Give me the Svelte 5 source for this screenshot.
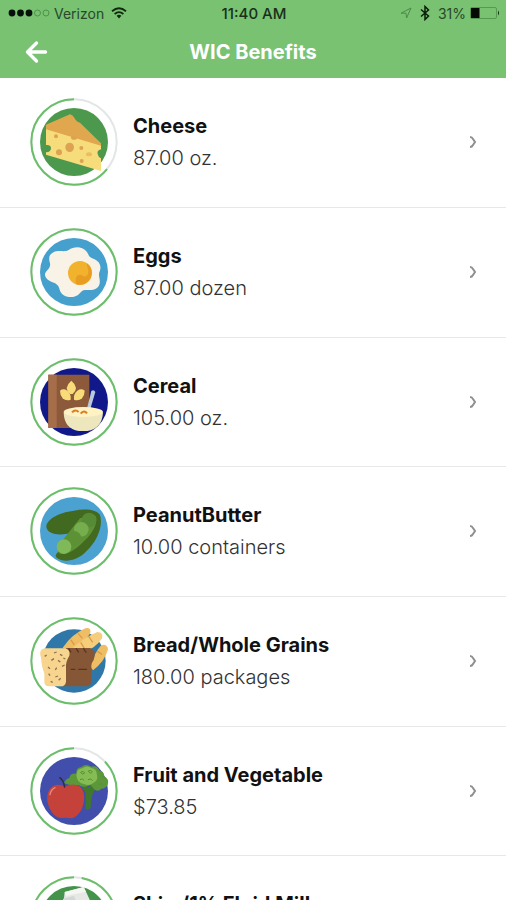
<script lang="ts">
  type Food = "cheese" | "eggs" | "cereal" | "peas" | "bread" | "produce" | "milk";

  interface Benefit {
    name: string;
    amount: string;
    food: Food;
    remaining: number;
    plate: string;
  }

  const benefits: Benefit[] = [
    { name: "Cheese", amount: "87.00 oz.", food: "cheese", remaining: 64, plate: "#4c994e" },
    { name: "Eggs", amount: "87.00 dozen", food: "eggs", remaining: 100, plate: "#46a0cd" },
    { name: "Cereal", amount: "105.00 oz.", food: "cereal", remaining: 100, plate: "#11198a" },
    { name: "PeanutButter", amount: "10.00 containers", food: "peas", remaining: 100, plate: "#4ba1cf" },
    { name: "Bread/Whole Grains", amount: "180.00 packages", food: "bread", remaining: 100, plate: "#2f77a8" },
    { name: "Fruit and Vegetable", amount: "$73.85", food: "produce", remaining: 87, plate: "#414eab" },
    { name: "Skim/1% Fluid Milk", amount: "12.00 gallons", food: "milk", remaining: 97, plate: "#43934a" },
  ];
</script>

<div class="screen">
  <header>
    <div class="status-bar">
      <div class="carrier">
        <svg width="42" height="10" viewBox="0 0 42 10" aria-hidden="true">
          <g fill="#06100a">
            <circle cx="4" cy="5" r="3.4" />
            <circle cx="12.5" cy="5" r="3.4" />
            <circle cx="21" cy="5" r="3.4" />
          </g>
          <g fill="none" stroke="#4d8a49" stroke-width="0.9">
            <circle cx="29.5" cy="5" r="3" />
            <circle cx="38" cy="5" r="3" />
          </g>
        </svg>
        <span>Verizon</span>
        <svg class="wifi" width="16" height="12" viewBox="0 0 16 12" aria-hidden="true">
          <g fill="none" stroke="#12290f" stroke-width="1.8">
            <path d="M1 4.2Q8 -1.6 15 4.2" />
            <path d="M3.6 7Q8 3.2 12.4 7" />
          </g>
          <path d="M5.6 8.8Q8 6.8 10.4 8.8L8 11.6z" fill="#12290f" />
        </svg>
      </div>
      <span class="clock">11:40 AM</span>
      <div class="indicators">
        <svg width="12" height="12" viewBox="0 0 12 12" aria-hidden="true">
          <path d="M1 6.2L11 1L6.6 11L6 6.2z" fill="none" stroke="#4d8a49" />
        </svg>
        <svg class="bluetooth" width="10" height="16" viewBox="0 0 10 16" aria-hidden="true">
          <path d="M1 4.5L8.5 11L5 14.5V1.5L8.5 5L1 11.5" fill="none" stroke="#0c1d0a" stroke-width="1.5" />
        </svg>
        <span>31%</span>
        <svg width="30" height="12" viewBox="0 0 30 12" aria-hidden="true">
          <rect x="0.5" y="0.5" width="26" height="11" rx="1.5" fill="none" stroke="#559a50" />
          <rect x="1" y="1" width="8.5" height="10" fill="#050b04" />
          <path d="M28 3.5Q30 6 28 8.5z" fill="#12290f" />
        </svg>
      </div>
    </div>
    <div class="nav-bar">
      <button class="back" aria-label="Back">
        <svg width="24" height="24" viewBox="0 0 24 24" aria-hidden="true">
          <path
            d="M12.5 3L3.5 12L12.5 21M4 12H21.5"
            fill="none"
            stroke="#fff"
            stroke-width="3.4"
            stroke-linecap="round"
            stroke-linejoin="round"
          />
        </svg>
      </button>
      <h1>WIC Benefits</h1>
    </div>
  </header>

  <main>
    <ul>
      {#each benefits as b}
        <li>
          <a href="#{b.food}">
            <svg class="badge" viewBox="-132 -132 264 264" aria-hidden="true">
              <circle r="128" fill="#fff" stroke="#e3e6e6" stroke-width="6" />
              <!-- the ring runs counter-clockwise from twelve o'clock -->
              <circle
                r="128"
                fill="none"
                stroke="#6abf69"
                stroke-width="6"
                pathLength="100"
                stroke-dasharray="{b.remaining} {100 - b.remaining}"
                transform="scale(-1 1) rotate(-90)"
              />
              <circle r={b.food === "bread" ? 95 : 102} fill={b.plate} />
              {@render art(b.food)}
            </svg>
            <div class="info">
              <h2>{b.name}</h2>
              <p>{b.amount}</p>
            </div>
            <svg class="chevron" width="8" height="12" viewBox="0 0 8 12" aria-hidden="true">
              <path d="M1 1Q3 1 4 3L6 6L4 9Q3 11 1 11" fill="none" stroke="#8f8f8f" stroke-width="2" />
            </svg>
          </a>
        </li>
      {/each}
    </ul>
  </main>
</div>

{#snippet art(food: Food)}
  {#if food === "cheese"}
    <path d="M-84 -52L-12 -83Q-4 -82 2 -71Q6 -61 18 -58L81 4V14L-84 -36z" fill="#e0a74f" />
    <path
      d="M-84 -38L81 11V22Q68 25 71 36Q73 46 81 49V87L-84 38V31Q-68 29 -69 17Q-71 7 -84 9z"
      fill="#f7dc7c"
    />
    <g fill="#dda253">
      <ellipse cx="-13" cy="16" rx="13" ry="14" />
      <circle cx="-45" cy="31" r="9" />
      <circle cx="-54" cy="-17" r="6" />
      <ellipse cx="0" cy="-13" rx="9" ry="6" />
      <circle cx="22" cy="18" r="6" />
      <ellipse cx="45" cy="37" rx="9" ry="6" fill="#e8bd63" />
      <circle cx="23" cy="57" r="6" />
    </g>
  {:else if food === "eggs"}
    <path
      d="M-64 -58C-48 -68 -28 -58 -16 -66C0 -78 24 -78 37 -62C45 -52 43 -45 58 -40C80 -31 83 -15 76 1C72 13 81 24 76 38C70 54 50 55 33 54C19 55 18 71 0 74C-22 78 -39 69 -43 53C-46 39 -53 34 -68 29C-84 23 -92 9 -84 -1C-77 -10 -70 -13 -72 -26C-76 -40 -76 -51 -64 -58z"
      fill="#f8f2e7"
    />
    <circle cx="18" cy="3" r="36" fill="#f1b22d" />
    <path d="M38 -27A36 36 0 0 1 7 37Q2 26 8 12Q22 4 28 13Q44 16 43 -6Q38 -18 38 -27z" fill="#e99c22" />
  {:else if food === "cereal"}
    <path d="M-77 -82H46V78H-77z" fill="#8c5a3b" />
    <path d="M-77 -82H-52V78H-77z" fill="#a66d49" />
    <g fill="#f8dc79">
      <path d="M-8 -64Q17 -43 -4 -24H-12Q-33 -43 -8 -64z" />
      <path d="M-42 -34Q-32 -42 -20 -34Q-8 -24 -10 -7Q-24 -2 -34 -11Q-42 -20 -42 -34z" />
      <path d="M32 -34Q22 -42 10 -34Q-2 -24 0 -7Q14 -2 24 -11Q32 -20 32 -34z" />
    </g>
    <path d="M52 -33Q60 -38 64 -30L48 24H38z" fill="#b9c9dd" />
    <path d="M-31 32Q-29 80 14 87H40Q84 79 87 32z" fill="#eee7bd" />
    <ellipse cx="28" cy="30" rx="59" ry="15" fill="#fff3c4" />
    <g fill="none" stroke="#dd7d25" stroke-width="6">
      <path d="M-6 31Q4 20 14 30" />
      <path d="M20 35Q30 22 39 34" />
    </g>
  {:else if food === "peas"}
    <path d="M-82 -8C-89 -31 -48 -56 0 -61C35 -68 70 -64 78 -46C62 -20 18 1 -20 8C-51 14 -76 8 -82 -8z" fill="#41691f" />
    <path d="M77 -50C90 -16 68 35 34 64C7 91 -32 96 -52 80C-61 69 -45 63 -38 56L44 -49z" fill="#426b1f" />
    <path d="M63 -47C77 -30 54 12 28 32C1 60 -26 74 -45 67L-51 49L18 -38z" fill="#5d9237" />
    <circle cx="45" cy="-33" r="22" fill="#568a34" />
    <circle cx="22" cy="-5" r="22" fill="#76ad4d" />
    <circle cx="0" cy="22" r="22" fill="#5c9136" />
    <circle cx="-30" cy="47" r="22" fill="#80b957" />
  {:else if food === "bread"}
    <g fill="#eebd64">
      <path d="M-34 -40Q-4 -82 34 -98Q52 -102 49 -84Q26 -44 -12 -28z" />
      <path d="M-10 -34Q32 -72 70 -87Q89 -86 84 -68Q64 -36 20 -22z" fill="#f5cd7b" />
      <path d="M50 18Q59 -22 80 -46Q98 -55 102 -35Q92 2 57 28z" />
    </g>
    <g stroke="#dc9c47" stroke-width="4">
      <path d="M-10 -64L1 -48M12 -83L25 -68M20 -56L31 -38M44 -74L56 -56M70 -29L84 -20" />
    </g>
    <path
      d="M-24 -39H48Q66 -34 62 -15Q61 -3 52 8V58Q52 76 38 76H-36L-24 15Q-30 -20 -24 -39z"
      fill="#865736"
    />
    <path d="M-16 -38L-9 -26M6 -38L14 -26M28 -38L37 -25M-10 25H4M13 25H39" stroke="#58351f" stroke-width="4" />
    <path
      d="M-88 -38H-27Q-10 -34 -14 -16Q-26 4 -24 20V62Q-26 76 -40 76H-76Q-89 75 -89 62V36Q-97 18 -99 -10Q-108 -34 -88 -38z"
      fill="#f8d58f"
    />
    <path
      d="M-82 -18l-6 4M-60 -24l8 -3M-42 -20l7 4M-68 -2l8 -5M-48 -2l7 5M-32 -9l6 3M-78 18l6 5M-52 20l-4 7M-36 16l8 -4M-76 38l4 6M-56 48l8 -3M-70 61l6 3M-40 52l-6 6"
      stroke="#8a7350"
      stroke-width="4"
    />
  {:else if food === "produce"}
    <path d="M20 -17L35 5V54Q44 60 50 50Q50 10 67 -10L52 -21L42 -9L35 -20z" fill="#40792d" />
    <path
      d="M-30 -24Q-25 -36 -14 -39Q-11 -55 7 -52Q5 -70 22 -72Q35 -84 52 -73Q70 -78 76 -61Q90 -61 91 -44Q107 -35 101 -19Q94 -7 82 -7Q74 4 62 -4L50 -18Q30 -8 12 -18Q-12 -15 -30 -24z"
      fill="#5c983a"
    />
    <path d="M7 -47Q8 -66 25 -68Q39 -79 52 -69Q68 -67 69 -48Q73 -31 58 -24Q45 -14 30 -21Q10 -23 7 -47z" fill="#85bd54" />
    <path
      d="M20 -56q8 -7 12 2q-8 8 -12 -2M43 -60q9 -6 12 3q-6 8 -12 -3M18 -34q8 -6 12 2M42 -34q10 -6 14 3M84 -42q9 -4 10 6M75 -20q8 -5 11 2"
      fill="none"
      stroke="#568f3a"
      stroke-width="3"
    />
    <path
      d="M-26 -13C-10 -22 8 -22 20 -11C36 6 32 36 22 56C12 74 -2 84 -16 81Q-26 79 -36 81C-54 82 -70 64 -77 42C-86 14 -76 -10 -58 -17C-46 -21 -36 -18 -26 -13z"
      fill="#c4423a"
    />
    <path d="M-72 11Q-69 -5 -57 -10" fill="none" stroke="#e58a78" stroke-width="4" stroke-linecap="round" />
    <path d="M-44 -41Q-31 -34 -28 -10" fill="none" stroke="#332a3b" stroke-width="4" />
  {:else}
    <path d="M-28 -84L29 -99L36 -85L52 -50V65H-44V-45L-30 -65z" fill="#e6e8e5" />
    <path d="M-28 -84L29 -99L36 -85L-24 -72z" fill="#f5f5f2" />
    <path d="M-30 -65L0 -72L17 -35V65H-44V-45z" fill="#d2d8d7" />
  {/if}
{/snippet}

<style>
  :global(body) {
    margin: 0;
    background: #fff;
  }

  .screen {
    display: flex;
    flex-direction: column;
    height: 100vh;
    font-family: Inter, "Open Sans", sans-serif;
    color: #111;
  }

  header {
    flex: none;
    background: #78c272;
  }

  .status-bar {
    display: grid;
    grid-template-columns: 1fr auto 1fr;
    align-items: center;
    height: 26px;
    padding: 0 6px 0 8px;
    font-size: 14px;
    color: #27482a;
  }

  .carrier,
  .indicators {
    display: flex;
    align-items: center;
    gap: 4px;
  }

  .indicators {
    justify-content: flex-end;
  }

  .wifi {
    margin-left: 3px;
  }

  .bluetooth {
    margin: 0 4px;
  }

  .clock {
    font-size: 15px;
    font-weight: 500;
    color: #17301a;
  }

  .nav-bar {
    display: grid;
    grid-template-columns: 48px 1fr 48px;
    align-items: center;
    height: 52px;
    padding: 0 12px;
  }

  .back {
    display: flex;
    justify-content: center;
    padding: 8px 0;
    border: 0;
    background: none;
    cursor: pointer;
  }

  h1 {
    margin: 0;
    font-size: 20px;
    line-height: 24px;
    font-weight: 700;
    text-align: center;
    color: #fff;
  }

  main {
    flex: 1;
    min-height: 0;
    overflow-y: auto;
    scrollbar-width: none;
  }

  ul {
    margin: 0;
    padding: 0;
    list-style: none;
  }

  li {
    height: 129px;
    border-bottom: 1px solid #e8e8e8;
  }

  li:nth-child(3n) {
    height: 128px;
  }

  a {
    display: flex;
    align-items: center;
    gap: 15px;
    padding: 20px 29px 20px 30px;
    color: inherit;
    text-decoration: none;
  }

  .badge {
    flex: none;
    width: 88px;
    height: 88px;
  }

  .info {
    flex: 1;
    min-width: 0;
  }

  h2,
  p {
    margin: 0;
    font-size: 20px;
    line-height: 32px;
  }

  h2 {
    font-weight: 700;
  }

  p {
    font-weight: 300;
    color: #333;
  }

  .chevron {
    flex: none;
  }
</style>
